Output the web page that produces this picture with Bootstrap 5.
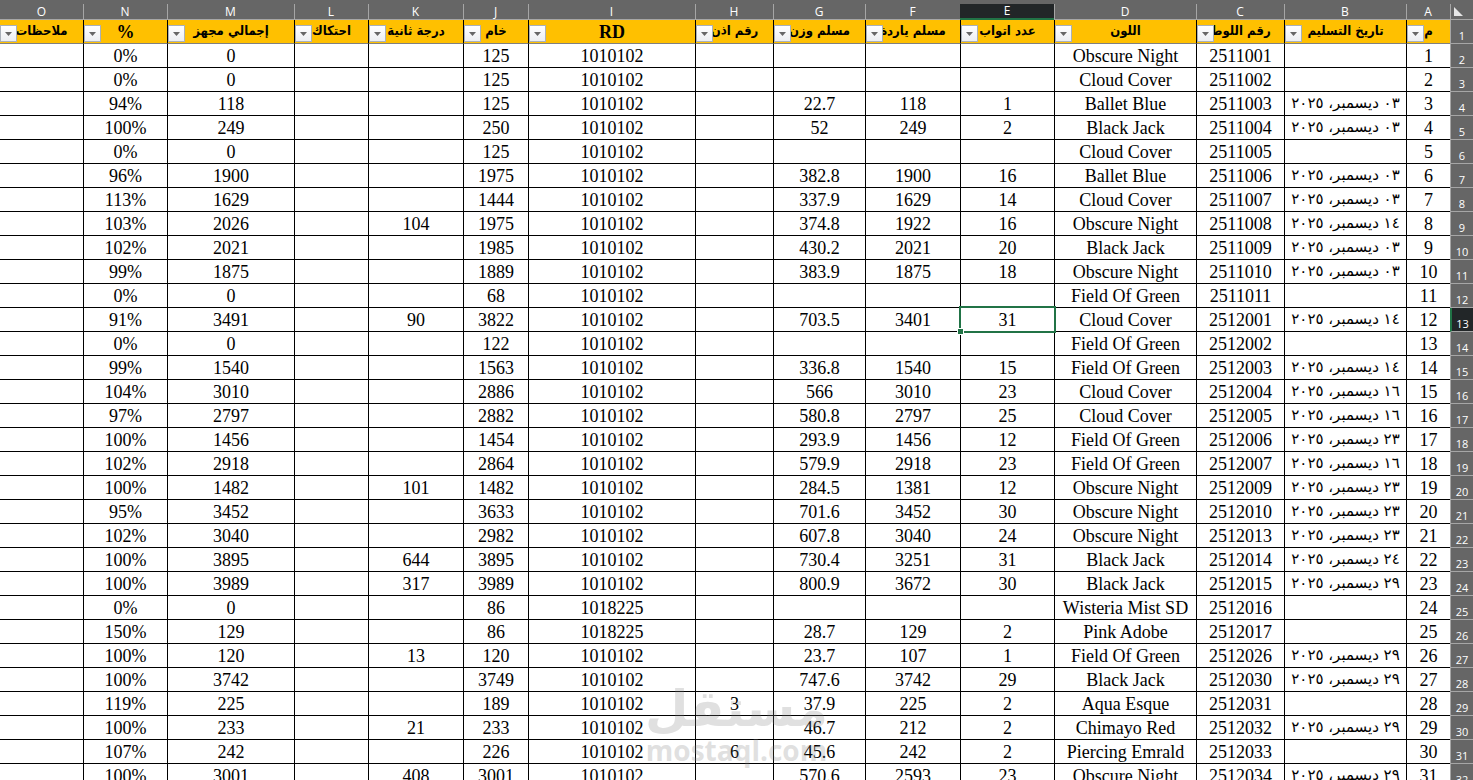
<!DOCTYPE html>
<html lang="ar" dir="rtl">
<head>
<meta charset="utf-8">
<meta name="viewport" content="width=device-width, initial-scale=1">
<title>متابعة اللوطات</title>
<link href="https://cdn.jsdelivr.net/npm/bootstrap@5.3.0/dist/css/bootstrap.min.css" rel="stylesheet">
<style>
  :root { --bar: #666666; --bar-line: #a6a6a6; --dark: #222628; --green: #217346; --gold: #ffc000; }
  .sheet-grid { table-layout: fixed; border-collapse: separate; border-spacing: 0; line-height: 21px;
    font-family: "Liberation Serif", "DejaVu Sans", serif; font-size: 18px; color: #000; }
  .sheet-grid th, .sheet-grid td { padding: 2px 0 0; white-space: nowrap; text-align: center; }
  .sheet-grid td { height: 24px; border-left: 1px solid #000; border-bottom: 1px solid #000; vertical-align: middle; }
  .sheet-grid .col-letters th { height: 20px; padding: 4px 0 0; background: linear-gradient(var(--bar-line), var(--bar-line)) 0 4px / 1px 100% no-repeat var(--bar);
    border-bottom: 1px solid var(--bar-line); color: #fff; font: 400 12px/15px "Open Sans", sans-serif; }
  .sheet-grid .col-letters th.picked { background: linear-gradient(var(--bar), var(--bar)) 0 0 / 100% 4px no-repeat var(--dark); border-bottom: 2px solid var(--green); line-height: 14px; }
  .sheet-grid .col-letters th:last-child { background: var(--bar); }
  .corner svg { display: block; margin-right: auto; margin-left: 4px; }
  .sheet-grid th.row-no { background: var(--bar); color: #fff; border-bottom: 1px solid var(--bar-line);
    border-left: 1px solid var(--bar-line); height: 24px; font: 400 11px/15px "Open Sans", sans-serif; vertical-align: bottom; padding: 7px 0 0; }
  .sheet-grid th.row-no.picked { background: var(--dark); border-left: 2px solid var(--green); }
  .field-name { position: relative; background: var(--gold); border-left: 1px solid #000; border-bottom: 1px solid #808080; height: 24px;
    font-weight: 700; }
  .sheet-grid td:last-child, .field-name:last-child { border-left: 0; }
  .ar-name { display: block; padding-bottom: 3px; font: 700 13px/18px "DejaVu Sans Condensed", "DejaVu Sans", sans-serif; }
  .ar-date { display: block; padding-bottom: 3px; font: 400 15px/18px "DejaVu Sans", sans-serif; }
  .filter-btn { position: absolute; left: 0; bottom: 1px; width: 17px; height: 17px; padding: 0; border: 1px solid #a9b0b8;
    background: linear-gradient(#fff, #eceef1); display: flex; align-items: center; justify-content: center; }
  .active-cell { position: relative; }
  .cell-frame { position: absolute; inset: -2px; border: 2px solid var(--green); pointer-events: none; }
  .cell-frame::after { content: ""; position: absolute; left: -3px; bottom: -3px; width: 5px; height: 5px; background: var(--green); outline: 1px solid #fff; }
  .watermark { position: absolute; left: 50%; bottom: 14px; transform: translateX(-50%); color: #808080; opacity: .24; pointer-events: none; text-align: center; }
  .wm-name { font: 700 50px/50px "DejaVu Sans", sans-serif; }
  .wm-site { font: 700 28px/32px "Open Sans", sans-serif; }
</style>
</head>
<body class="bg-white m-0">
<main class="position-relative vh-100 overflow-hidden">
  <table class="sheet-grid w-100 mb-0">
    <colgroup>
      <col width="23"><col width="44"><col width="122"><col width="88"><col width="142"><col width="94"><col width="95"><col width="92"><col width="78"><col width="167"><col width="65"><col width="95"><col width="74"><col width="127"><col width="84"><col>
    </colgroup>
    <thead id="head"></thead>
    <tbody id="rows"></tbody>
  </table>
  <div class="watermark" aria-hidden="true">
    <div class="wm-name">مستقل</div>
    <div class="wm-site" dir="ltr">mostaql.com</div>
  </div>
</main>
<script src="https://cdn.jsdelivr.net/npm/bootstrap@5.3.0/dist/js/bootstrap.bundle.min.js"></script>
<script>
  const fields = ['م', 'تاريخ التسليم', 'رقم اللوط', 'اللون', 'عدد اتواب', 'مسلم ياردة', 'مسلم وزن', 'رقم اذن', 'RD', 'خام', 'درجة ثانية', 'احتكاك', 'إجمالي مجهز', '%', 'ملاحظات'];
  // December day | lot | colour | rolls | yards | weight | permit | RD | raw | second grade | total | percent
  const data = `
|2511001|Obscure Night|||||1010102|125||0|0%
|2511002|Cloud Cover|||||1010102|125||0|0%
٠٣|2511003|Ballet Blue|1|118|22.7||1010102|125||118|94%
٠٣|2511004|Black Jack|2|249|52||1010102|250||249|100%
|2511005|Cloud Cover|||||1010102|125||0|0%
٠٣|2511006|Ballet Blue|16|1900|382.8||1010102|1975||1900|96%
٠٣|2511007|Cloud Cover|14|1629|337.9||1010102|1444||1629|113%
١٤|2511008|Obscure Night|16|1922|374.8||1010102|1975|104|2026|103%
٠٣|2511009|Black Jack|20|2021|430.2||1010102|1985||2021|102%
٠٣|2511010|Obscure Night|18|1875|383.9||1010102|1889||1875|99%
|2511011|Field Of Green|||||1010102|68||0|0%
١٤|2512001|Cloud Cover|31|3401|703.5||1010102|3822|90|3491|91%
|2512002|Field Of Green|||||1010102|122||0|0%
١٤|2512003|Field Of Green|15|1540|336.8||1010102|1563||1540|99%
١٦|2512004|Cloud Cover|23|3010|566||1010102|2886||3010|104%
١٦|2512005|Cloud Cover|25|2797|580.8||1010102|2882||2797|97%
٢٣|2512006|Field Of Green|12|1456|293.9||1010102|1454||1456|100%
١٦|2512007|Field Of Green|23|2918|579.9||1010102|2864||2918|102%
٢٣|2512009|Obscure Night|12|1381|284.5||1010102|1482|101|1482|100%
٢٣|2512010|Obscure Night|30|3452|701.6||1010102|3633||3452|95%
٢٣|2512013|Obscure Night|24|3040|607.8||1010102|2982||3040|102%
٢٤|2512014|Black Jack|31|3251|730.4||1010102|3895|644|3895|100%
٢٩|2512015|Black Jack|30|3672|800.9||1010102|3989|317|3989|100%
|2512016|Wisteria Mist SD|||||1018225|86||0|0%
|2512017|Pink Adobe|2|129|28.7||1018225|86||129|150%
٢٩|2512026|Field Of Green|1|107|23.7||1010102|120|13|120|100%
٢٩|2512030|Black Jack|29|3742|747.6||1010102|3749||3742|100%
|2512031|Aqua Esque|2|225|37.9|3|1010102|189||225|119%
٢٩|2512032|Chimayo Red|2|212|46.7||1010102|233|21|233|100%
|2512033|Piercing Emrald|2|242|45.6|6|1010102|226||242|107%
٢٩|2512034|Obscure Night|23|2593|570.6||1010102|3001|408|3001|100%`.trim().split('\n');

  const letters = [...'ABCDEFGHIJKLMNO'].map(l => `<th scope="col"${l === 'E' ? ' class="picked"' : ''}>${l}</th>`).join('');
  const names = fields.map(f => `<th scope="col" class="field-name"><span class="${/[\u0600-\u06ff]/.test(f) ? 'ar-name' : ''}">${f}</span><button type="button" class="filter-btn" aria-label="${f}"><svg width="7" height="4" viewBox="0 0 7 4"><path d="M0 0h7L3.500 4z" fill="#666"/></svg></button></th>`).join('');
  document.getElementById('head').innerHTML =
    `<tr class="col-letters"><th class="corner"><svg width="9" height="9" viewBox="0 0 9 9"><path d="M0 0v9h9z" fill="#e6e6e6"/></svg></th>${letters}</tr>
     <tr><th scope="row" class="row-no">1</th>${names}</tr>`;

  document.getElementById('rows').innerHTML = data.map((line, i) => {
    const v = line.split('|');
    const date = v[0] ? `<span class="ar-date">${v[0]} ديسمبر، ٢٠٢٥</span>` : '';
    const cells = [i + 1, date, ...v.slice(1, 10), '', v[10], v[11], ''];
    const active = i === 11;
    return `<tr><th scope="row" class="row-no${active ? ' picked' : ''}">${i + 2}</th>` +
      cells.map((c, n) => active && n === 4 ? `<td class="active-cell">${c}<span class="cell-frame"></span></td>` : `<td>${c}</td>`).join('') + '</tr>';
  }).join('');
</script>
</body>
</html>
